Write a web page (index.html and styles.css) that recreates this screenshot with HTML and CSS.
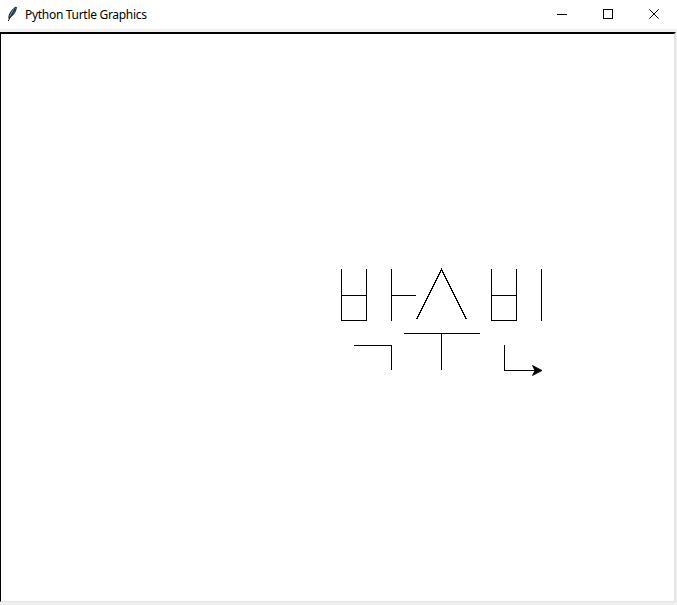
FILE: index.html
```html
<!DOCTYPE html>
<html>
<head>
<meta charset="utf-8">
<link rel="stylesheet" href="styles.css">
</head>
<body>
<div class="window">
  <div class="titlebar">
    <div class="title">
      <svg class="app-icon" width="16" height="16" viewBox="0 0 16 16">
        <path d="M12 1 C9.2 2.4 6.2 5.8 5.1 9.6 L4.8 12.4 L6.7 10.7 C10 8.8 12 5 12.4 1.4 Z" fill="#4a86d0" stroke="#1a1a1a" stroke-width="1"/>
        <path d="M11 3 L4.2 15" stroke="#1a1a1a" stroke-width="1" fill="none"/>
      </svg>
      <span class="title-text">Python Turtle Graphics</span>
    </div>
    <div class="controls">
      <div class="ctl"><svg width="10" height="10" viewBox="0 0 10 10"><path d="M0 5.5 H10" stroke="#000" stroke-width="1" shape-rendering="crispEdges"/></svg></div>
      <div class="ctl"><svg width="10" height="10" viewBox="0 0 10 10"><rect x="0.5" y="0.5" width="9" height="9" fill="none" stroke="#000" stroke-width="1" shape-rendering="crispEdges"/></svg></div>
      <div class="ctl"><svg width="10" height="10" viewBox="0 0 10 10"><path d="M0.3 0.3 L9.7 9.7 M9.7 0.3 L0.3 9.7" stroke="#000" stroke-width="1"/></svg></div>
    </div>
  </div>
  <div class="client">
    <div class="canvas">
      <svg class="drawing" width="673" height="567" viewBox="1 34 673 567">
        <g stroke="#000" stroke-width="1" fill="none" shape-rendering="crispEdges">
          <path d="M341.5 269 V320.5 H366.5 V269 M341.5 295.5 H366.5"/>
          <path d="M391.5 269 V320.5 M391.5 295.5 H415.5"/>
          <path d="M416.5 319.5 L441.5 269.5 L466.5 319.5"/>
          <path d="M491.5 269 V320.5 H516.5 V269 M491.5 295.5 H516.5"/>
          <path d="M541.5 269 V320.5"/>
          <path d="M354 345.5 H391.5 V369.5"/>
          <path d="M404 333.5 H479.5 M441.5 333.5 V369.5"/>
          <path d="M504.5 345 V370.5 H535"/>
        </g>
        <polygon points="542,370.5 532.5,365.5 535,370.5 532.5,375.5" fill="#000" stroke="#000" stroke-width="0.8"/>
      </svg>
    </div>
  </div>
</div>
</body>
</html>
```
FILE: styles.css
```css
html, body {
  margin: 0;
  padding: 0;
}
body {
  width: 677px;
  height: 605px;
  overflow: hidden;
  background: #f0f0f0;
}
.window {
  width: 677px;
  height: 605px;
  display: flex;
  flex-direction: column;
}
.titlebar {
  height: 29px;
  flex: none;
  background: #ffffff;
  display: flex;
  align-items: stretch;
  justify-content: space-between;
}
.title {
  display: flex;
  align-items: center;
  padding-left: 4px;
  gap: 5px;
  padding-bottom: 1px;
}
.app-icon {
  display: block;
}
.title-text {
  font-family: "Noto Sans", "Open Sans", sans-serif;
  font-size: 12px;
  color: #000;
  letter-spacing: -0.3px;
}
.controls {
  display: flex;
}
.ctl {
  width: 46px;
  display: flex;
  align-items: center;
  justify-content: center;
  padding-bottom: 2px;
}
.ctl svg {
  display: block;
}
.client {
  flex: 1;
  background: #f0f0f0;
  padding-top: 3px;
  padding-right: 1px;
  padding-bottom: 4px;
  display: flex;
}
.canvas {
  flex: 1;
  background: #ffffff;
  border-top: 2px solid #000;
  border-left: 1px solid #000;
  border-right: 2px solid #e3e3e3;
  border-bottom: 1px solid #e3e3e3;
  overflow: hidden;
}
.drawing {
  display: block;
}
```
